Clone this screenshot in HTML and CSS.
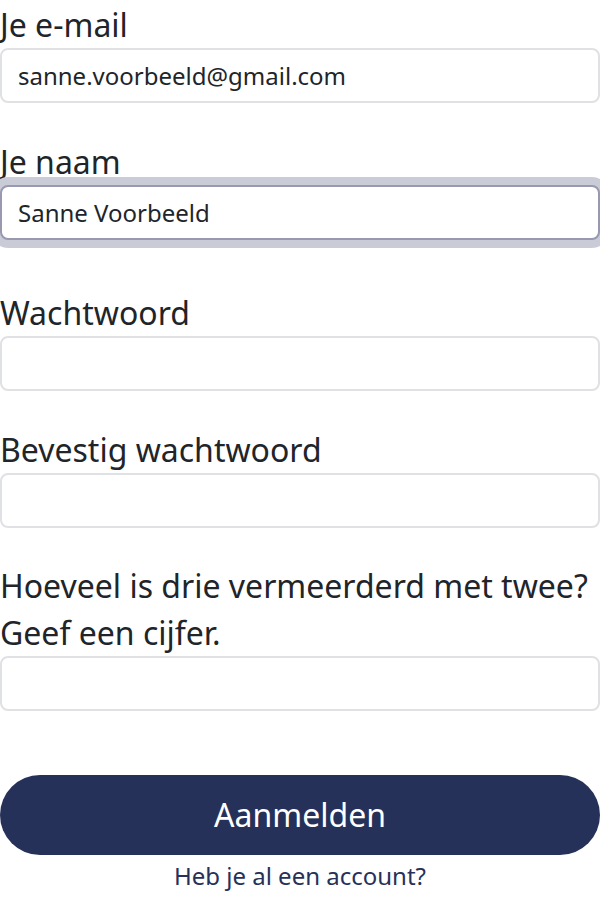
FILE: index.html
```html
<!DOCTYPE html>
<html lang="nl">
<head>
<meta charset="utf-8">
<title>Aanmelden</title>
<link rel="stylesheet" href="styles.css">
</head>
<body>
<form class="form">
  <div class="field">
    <label class="label" for="email">Je e-mail</label>
    <input class="input" id="email" type="email" value="sanne.voorbeeld@gmail.com">
  </div>
  <div class="field field-focus">
    <label class="label" for="naam">Je naam</label>
    <input class="input input-focus" id="naam" type="text" value="Sanne Voorbeeld">
  </div>
  <div class="field">
    <label class="label" for="pw">Wachtwoord</label>
    <input class="input" id="pw" type="password">
  </div>
  <div class="field">
    <label class="label" for="pw2">Bevestig wachtwoord</label>
    <input class="input" id="pw2" type="password">
  </div>
  <div class="field">
    <label class="label" for="q">Hoeveel is drie vermeerderd met twee? Geef een cijfer.</label>
    <input class="input" id="q" type="text">
  </div>
  <button class="button" type="button">Aanmelden</button>
  <a class="link" href="#">Heb je al een account?</a>
</form>
</body>
</html>
```
FILE: styles.css
```css
html, body {
  margin: 0;
  padding: 0;
  background: #ffffff;
}
body {
  font-family: "Noto Sans", "Open Sans", sans-serif;
  color: #212529;
}
.form {
  display: flex;
  flex-direction: column;
  width: 600px;
  padding-top: 1px;
}
.field {
  display: flex;
  flex-direction: column;
  margin-bottom: 34.5px;
}
.field-focus {
  margin-bottom: 49.5px;
}
.label {
  font-size: 32px;
  line-height: 47px;
}
.input {
  box-sizing: border-box;
  width: 100%;
  height: 55px;
  margin: 0;
  padding: 0 16px;
  border: 2px solid #dfe1e4;
  border-radius: 8px;
  font-family: inherit;
  font-size: 24px;
  color: #212529;
  background: #fff;
  outline: none;
}
.input-focus {
  border-color: #9899b0;
  box-shadow: 0 0 0 8px #c9ccd6;
}
.button {
  margin-top: 29px;
  height: 80px;
  border: none;
  border-radius: 40px;
  background: #263159;
  color: #fff;
  font-family: inherit;
  font-size: 32px;
  padding: 0;
}
.link {
  align-self: center;
  margin-top: 4px;
  font-size: 24px;
  line-height: 33px;
  color: #263159;
  text-decoration: none;
}
```
